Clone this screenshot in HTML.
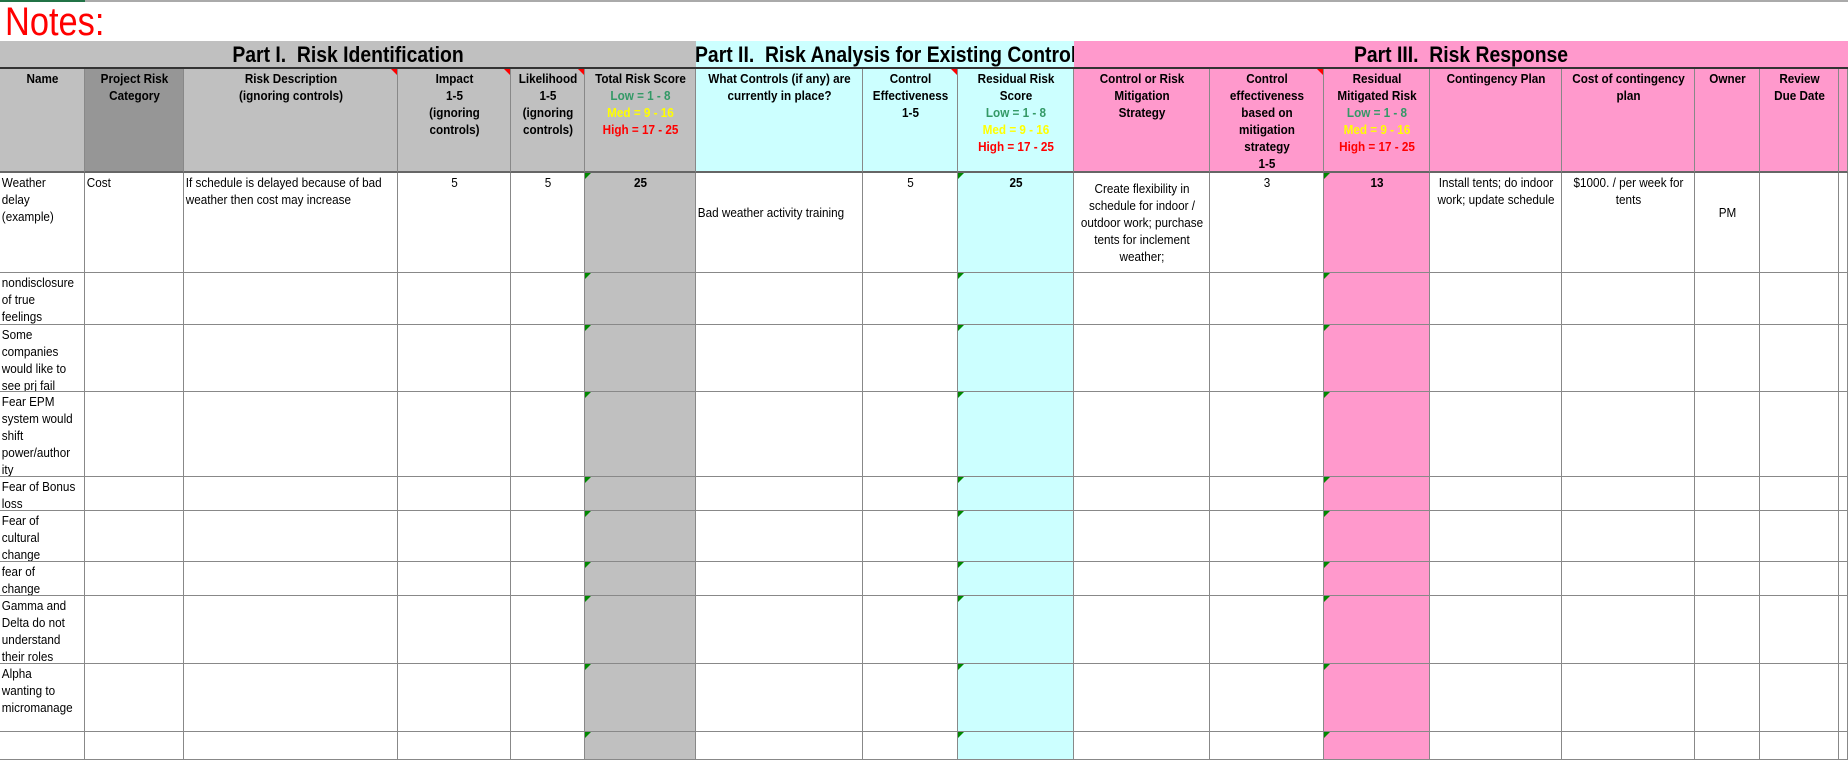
<!DOCTYPE html>
<html><head><meta charset="utf-8"><style>
body{margin:0;width:1848px;height:737px;overflow:hidden;background:#fff;font-family:"Liberation Sans",Arial,sans-serif;position:relative}
.c{position:absolute;box-sizing:border-box;border-right:1px solid #888;border-bottom:1px solid #888;font-size:13px;overflow:hidden;color:#000}
.in{position:absolute;left:0;top:0;transform:scaleX(0.9);transform-origin:0 0;padding:1px 2px;box-sizing:border-box;line-height:17px}
.h .in{font-weight:bold;text-align:center}
.g{background:#c0c0c0}.dg{background:#969696}.cy{background:#ccffff}.pk{background:#ff99cc}
.lo{color:#339966}.me{color:#ffff00}.hi{color:#ff0000}
.tr{position:absolute;top:0;right:0;width:0;height:0;border-top:6px solid #f00;border-left:6px solid transparent}
.tg{position:absolute;top:0;left:0;width:0;height:0;border-top:6px solid #080;border-right:6px solid transparent}
.ph{position:absolute;top:41px;height:28px;font-weight:bold;font-size:22px;line-height:28px;overflow:hidden;white-space:nowrap;border-bottom:2px solid #333;box-sizing:border-box}
.ph span{position:absolute;top:0;transform:scaleX(0.88);transform-origin:50% 0}
</style></head><body>
<div style="position:absolute;top:0;left:0;width:1848px;height:2px;background:#aaa"></div>
<div style="position:absolute;top:0;left:0;width:85px;height:2px;background:#217346"></div>
<div style="position:absolute;left:5px;top:2px;font-size:40px;color:#f00;line-height:40px;transform:scaleX(0.86);transform-origin:0 0">Notes:</div>
<div class="ph g" style="left:0;width:696px"><span style="left:0;width:696px;text-align:center">Part I.&nbsp; Risk Identification</span></div>
<div class="ph cy" style="left:696px;width:378px"><span style="left:-80px;width:550px;text-align:center">Part II.&nbsp; Risk Analysis for Existing Controls</span></div>
<div class="ph pk" style="left:1074px;width:774px"><span style="left:0;width:774px;text-align:center">Part III.&nbsp; Risk Response</span></div>
<div id="t"></div>
<script>
var X=[0,85,184,398,511,585,696,863,958,1074,1210,1324,1430,1562,1695,1760,1839,1848];
var Y=[69,173,273,325,392,477,511,562,596,664,732,760];
var hc=['g','dg','g','g','g','g','cy','cy','cy','pk','pk','pk','pk','pk','pk','pk','pk'];
var sc='<span class="lo">Low = 1 - 8</span><br><span class="me">Med = 9 - 16</span><br><span class="hi">High = 17 - 25</span>';
var H=['Name','Project Risk<br>Category','Risk Description<br>(ignoring controls)','Impact<br>1-5<br>(ignoring<br>controls)','Likelihood<br>1-5<br>(ignoring<br>controls)','Total Risk Score<br>'+sc,'What Controls (if any) are<br>currently in place?','Control<br>Effectiveness<br>1-5','Residual Risk<br>Score<br>'+sc,'Control or Risk<br>Mitigation<br>Strategy','Control<br>effectiveness<br>based on<br>mitigation<br>strategy<br>1-5','Residual<br>Mitigated Risk<br>'+sc,'Contingency Plan','Cost of contingency<br>plan','Owner','Review<br>Due Date',''];
var red={2:1,3:1,4:1,7:1,10:1};
var o='';
function cell(i,y0,y1,cls,html,extra,st){var w=X[i+1]-X[i];o+='<div class="c '+cls+'" style="left:'+X[i]+'px;top:'+y0+'px;width:'+w+'px;height:'+(y1-y0)+'px;'+(st||'')+'"><div class="in" style="width:'+(w/0.9)+'px">'+html+'</div>'+(extra||'')+'</div>';}
for(var i=0;i<17;i++){cell(i,Y[0],Y[1],'h '+hc[i],H[i],red[i]?'<div class="tr"></div>':'','border-bottom:2px solid #666');}
var names=['Weather<br>delay<br>(example)','nondisclosure<br>of true<br>feelings','Some<br>companies<br>would like to<br>see prj fail','Fear EPM<br>system would<br>shift<br>power/author<br>ity','Fear of Bonus<br>loss','Fear of<br>cultural<br>change','fear of<br>change','Gamma and<br>Delta do not<br>understand<br>their roles','Alpha<br>wanting to<br>micromanage',''];
var r1=['','Cost','If schedule is delayed because of bad weather then cost may increase','<div style="text-align:center">5</div>','<div style="text-align:center">5</div>','<div style="text-align:center;font-weight:bold">25</div>','<div style="margin-top:30px;white-space:nowrap">Bad weather activity training</div>','<div style="text-align:center">5</div>','<div style="text-align:center;font-weight:bold">25</div>','<div style="text-align:center;margin-top:6px">Create flexibility in schedule for indoor / outdoor work; purchase tents for inclement weather;</div>','<div style="text-align:center">3</div>','<div style="text-align:center;font-weight:bold">13</div>','<div style="text-align:center">Install tents; do indoor work; update schedule</div>','<div style="text-align:center">$1000. / per week for tents</div>','<div style="text-align:center;margin-top:30px">PM</div>','',''];
for(var r=0;r<10;r++){
 for(var i=0;i<17;i++){
  var cls=i==5?'g':i==8?'cy':i==11?'pk':'';
  var html=i==0?names[r]:(r==0?r1[i]:'');
  cell(i,Y[r+1],Y[r+2],cls,html,(i==5||i==8||i==11)?'<div class="tg"></div>':'');
 }
}
document.getElementById('t').innerHTML=o;
</script>
</body></html>
